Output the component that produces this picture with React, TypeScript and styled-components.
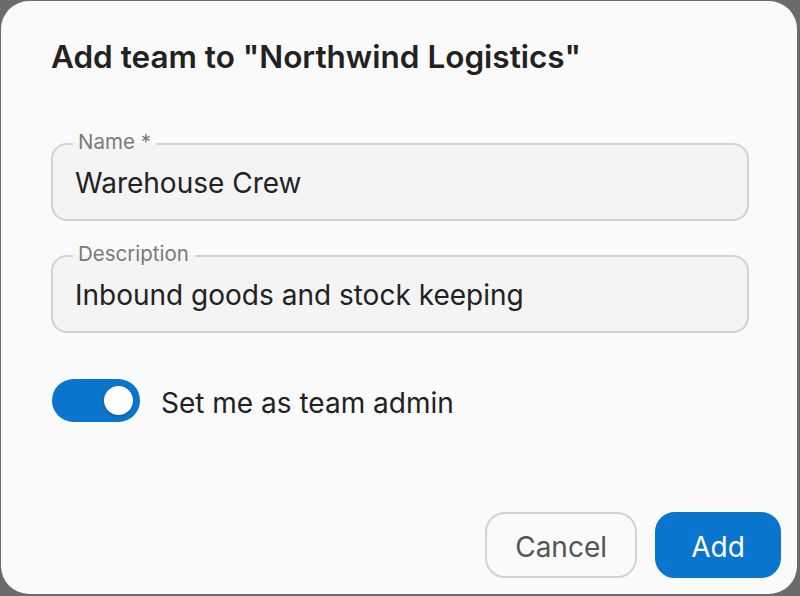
import styled, { createGlobalStyle } from "styled-components";
import { useState } from "react";

const GlobalStyle = createGlobalStyle`
  html, body {
    margin: 0;
    padding: 0;
    background: #6b6b6b;
    font-family: Inter, "Noto Sans", sans-serif;
  }
  * {
    box-sizing: border-box;
  }
`;

export default function App() {
  const [admin, setAdmin] = useState(true);
  const [name, setName] = useState("Warehouse Crew");
  const [desc, setDesc] = useState("Inbound goods and stock keeping");

  return (
    <Backdrop>
      <GlobalStyle />
      <Dialog>
        <Body>
          <Title>Add team to "Northwind Logistics"</Title>
          <Fields>
            <Field>
              <Legend>Name *</Legend>
              <Input value={name} onChange={(e) => setName(e.target.value)} />
            </Field>
            <Field>
              <Legend>Description</Legend>
              <Input value={desc} onChange={(e) => setDesc(e.target.value)} />
            </Field>
          </Fields>
          <SwitchRow onClick={() => setAdmin((prev) => !prev)}>
            <Track $on={admin}>
              <Thumb />
            </Track>
            <SwitchLabel>Set me as team admin</SwitchLabel>
          </SwitchRow>
        </Body>
        <Footer>
          <Button>Cancel</Button>
          <Button $primary>Add</Button>
        </Footer>
      </Dialog>
    </Backdrop>
  );
}

const Backdrop = styled.div`
  width: 800px;
  height: 596px;
  padding: 1px 3px 2px 1px;
`;

const Dialog = styled.div`
  width: 100%;
  height: 100%;
  background: #fafafa;
  border-radius: 28px;
  display: flex;
  flex-direction: column;
  justify-content: space-between;
`;

const Body = styled.div`
  padding: 37px 48px 0 50px;
`;

const Title = styled.h2`
  margin: 0;
  font-size: 31.5px;
  line-height: 38px;
  font-weight: 600;
  color: #222;
`;

const Fields = styled.div`
  display: flex;
  flex-direction: column;
  gap: 20px;
  margin-top: 53px;
`;

const Field = styled.fieldset`
  margin: 0;
  padding: 0 20px;
  height: 92px;
  border: 2px solid #d2d2d2;
  border-radius: 16px;
  background: #f4f4f4;
`;

const Legend = styled.legend`
  padding: 0 6px 4px 5px;
  font-size: 20.5px;
  line-height: 26px;
  color: #7a7a7a;
`;

const Input = styled.input`
  display: block;
  width: 100%;
  margin-top: 7px;
  padding: 0 2px;
  border: none;
  outline: none;
  background: transparent;
  font-family: inherit;
  font-size: 28px;
  line-height: 34px;
  color: #222;
`;

const SwitchRow = styled.label`
  display: flex;
  align-items: center;
  gap: 21px;
  margin-top: 46px;
  cursor: pointer;
  user-select: none;
`;

const Track = styled.span<{ $on: boolean }>`
  display: flex;
  align-items: center;
  justify-content: ${(p) => (p.$on ? "flex-end" : "flex-start")};
  width: 88px;
  height: 43px;
  margin-left: 1px;
  padding: 0 7px;
  border-radius: 22px;
  background: ${(p) => (p.$on ? "#0a75cd" : "#bdbdbd")};
`;

const Thumb = styled.span`
  width: 29px;
  height: 29px;
  border-radius: 50%;
  background: #fff;
  box-shadow: 0 1px 3px rgba(0, 0, 0, 0.3);
`;

const SwitchLabel = styled.span`
  padding-top: 4px;
  font-size: 28px;
  color: #222;
`;

const Footer = styled.div`
  display: flex;
  justify-content: flex-end;
  gap: 18px;
  padding: 16px;
`;

const Button = styled.button<{ $primary?: boolean }>`
  height: 66px;
  min-width: ${(p) => (p.$primary ? "126px" : "150px")};
  padding: 3px 28px 0;
  border-radius: 20px;
  border: 2px solid ${(p) => (p.$primary ? "#0a75cd" : "#d2d2d2")};
  background: ${(p) => (p.$primary ? "#0a75cd" : "#fafafa")};
  color: ${(p) => (p.$primary ? "#fff" : "#555")};
  font-family: inherit;
  font-size: 28px;
  cursor: pointer;
`;
